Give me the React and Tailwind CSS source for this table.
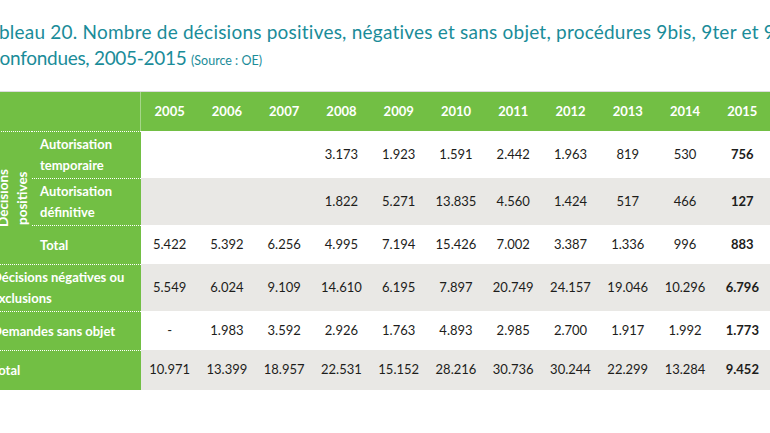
import React from "react";

const years = ["2005", "2006", "2007", "2008", "2009", "2010", "2011", "2012", "2013", "2014", "2015"];

const rows = [
  { key: "temp", values: ["", "", "", "3.173", "1.923", "1.591", "2.442", "1.963", "819", "530", "756"], gray: false, h: "h-[47px]" },
  { key: "def", values: ["", "", "", "1.822", "5.271", "13.835", "4.560", "1.424", "517", "466", "127"], gray: true, h: "h-[47px]" },
  { key: "tot1", values: ["5.422", "5.392", "6.256", "4.995", "7.194", "15.426", "7.002", "3.387", "1.336", "996", "883"], gray: false, h: "h-[39px]" },
  { key: "neg", values: ["5.549", "6.024", "9.109", "14.610", "6.195", "7.897", "20.749", "24.157", "19.046", "10.296", "6.796"], gray: true, h: "h-[47px]" },
  { key: "sans", values: ["-", "1.983", "3.592", "2.926", "1.763", "4.893", "2.985", "2.700", "1.917", "1.992", "1.773"], gray: false, h: "h-[39px]" },
  { key: "tot2", values: ["10.971", "13.399", "18.957", "22.531", "15.152", "28.216", "30.736", "30.244", "22.299", "13.284", "9.452"], gray: true, h: "h-[40px]" },
];

function Cells({ values, gray }) {
  return values.map((v, i) => (
    <td
      key={i}
      className={`text-center align-middle text-[13px] text-[#1d1d1b] ${gray ? "bg-[#e9e8e5]" : "bg-white"} ${i === 10 ? "font-bold" : ""}`}
    >
      {v}
    </td>
  ));
}

const label = "bg-[#72bf44] text-white font-bold text-[13px] leading-[21px] align-middle border-t border-dotted border-white";

export default function App() {
  return (
    <div className="w-[770px] h-[433px] overflow-hidden bg-white font-['Lato',sans-serif]">
      <div className="pt-[19px] text-[19px] leading-[26px] text-[#1a8c99] whitespace-nowrap">
        <div className="-ml-[20px] tracking-[0.22px]">Tableau 20. Nombre de décisions positives, négatives et sans objet, procédures 9bis, 9ter et 9quater</div>
        <div className="-ml-[9px] tracking-[-0.3px]">
          confondues, 2005-2015 <span className="text-[12.5px] tracking-normal">(Source : OE)</span>
        </div>
      </div>

      <table className="mt-[17px] -ml-[16px] w-[787px] table-fixed border-separate border-spacing-0 border-t border-[#dcdcdc]">
        <colgroup>
          <col className="w-[48px]" />
          <col className="w-[109px]" />
          {years.map((y) => (
            <col key={y} className="w-[57.27px]" />
          ))}
        </colgroup>
        <thead>
          <tr className="h-[39px]">
            <th colSpan={2} className="bg-[#72bf44] border-r border-[#a6d68a]" />
            {years.map((y) => (
              <th key={y} className="bg-[#72bf44] text-white font-bold text-[13px] text-center align-middle">
                {y}
              </th>
            ))}
          </tr>
        </thead>
        <tbody>
          <tr className={rows[0].h}>
            <td rowSpan={3} className={`${label} text-center`}>
              <div className="flex justify-center">
                <div className="[writing-mode:vertical-rl] rotate-180 text-[13.5px] leading-[19px] text-center ml-[10px]">
                  Décisions<br />positives
                </div>
              </div>
            </td>
            <td className={`${label} pl-[8px]`}>Autorisation<br />temporaire</td>
            <Cells values={rows[0].values} gray={rows[0].gray} />
          </tr>
          <tr className={rows[1].h}>
            <td className={`${label} pl-[8px]`}>Autorisation<br />définitive</td>
            <Cells values={rows[1].values} gray={rows[1].gray} />
          </tr>
          <tr className={rows[2].h}>
            <td className={`${label} pl-[8px]`}>Total</td>
            <Cells values={rows[2].values} gray={rows[2].gray} />
          </tr>
          <tr className={rows[3].h}>
            <td colSpan={2} className={`${label} pl-[8px]`}>Décisions négatives ou<br />exclusions</td>
            <Cells values={rows[3].values} gray={rows[3].gray} />
          </tr>
          <tr className={rows[4].h}>
            <td colSpan={2} className={`${label} pl-[8px]`}>Demandes sans objet</td>
            <Cells values={rows[4].values} gray={rows[4].gray} />
          </tr>
          <tr className={rows[5].h}>
            <td colSpan={2} className={`${label} pl-[8px]`}>Total</td>
            <Cells values={rows[5].values} gray={rows[5].gray} />
          </tr>
        </tbody>
      </table>
    </div>
  );
}
